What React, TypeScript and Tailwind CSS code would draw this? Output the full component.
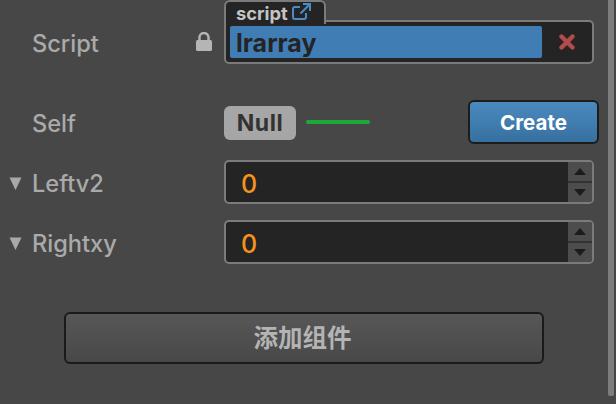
import React from "react";

const font = { fontFamily: '"Inter", "Liberation Sans", sans-serif' };

function NumberRow({ label }: { label: string }) {
  return (
    <div className="flex items-center h-[44px]">
      <div className="w-[224px] flex items-center pl-[9px] gap-[10px] shrink-0">
        <svg width="13" height="13" viewBox="0 0 13 13" className="shrink-0 mt-[2px]">
          <path d="M0.5 0.5h12L6.5 13z" fill="#a9a9a9" />
        </svg>
        <span className="text-[23.6px] font-medium text-[#aaaaaa] leading-none mt-[4px]">{label}</span>
      </div>
      <div className="w-[370px] h-[44px] rounded-[5px] border-2 border-[#7b7b7b] bg-[#242424] flex overflow-hidden">
        <div className="flex-1 flex items-center pl-[15px] pt-[4px] text-[25px] font-medium text-[#f6931e] leading-none">0</div>
        <div className="w-[24px] flex flex-col bg-[#4d4d4d]">
          <div className="flex-1 flex items-center justify-center border-b-2 border-[#333333]">
            <svg width="12" height="7" viewBox="0 0 12 7"><path d="M6 0l6 7H0z" fill="#1c1c1c" /></svg>
          </div>
          <div className="flex-1 flex items-center justify-center">
            <svg width="12" height="7" viewBox="0 0 12 7"><path d="M0 0h12L6 7z" fill="#1c1c1c" /></svg>
          </div>
        </div>
      </div>
    </div>
  );
}

export default function App() {
  return (
    <div className="w-[616px] h-[404px] bg-[#474747] flex overflow-hidden" style={font}>
      <div className="w-[608px] shrink-0 flex flex-col">
        <div className="flex h-[64px]">
          <div className="w-[224px] flex items-center justify-between pl-[32px] pr-[12px] pt-[24px] shrink-0">
            <span className="text-[23.6px] font-medium text-[#aaaaaa] leading-none">Script</span>
            <svg width="16" height="19" viewBox="0 0 16 19" className="-mt-[5px]">
              <path d="M3.5 9V5.5a4.5 4.5 0 0 1 9 0V9" fill="none" stroke="#b5b5b5" strokeWidth="2.4" />
              <rect x="0" y="8" width="16" height="11" rx="1.5" fill="#b5b5b5" />
            </svg>
          </div>
          <div className="w-[370px] h-[64px] relative flex flex-col justify-end">
            <div className="absolute left-0 top-0 w-[102px] h-[24px] rounded-t-[6px] border-2 border-b-0 border-[#7b7b7b] bg-[#242424] z-10 flex items-start pl-[10px] pt-[1px]">
              <span className="text-[18.3px] font-bold text-[#c4c4c4] leading-[20px]">script</span>
              <svg width="19" height="17" viewBox="0 0 19 17" fill="none" stroke="#4a8bc7" strokeWidth="2" className="ml-[4px]">
                <path d="M14 10v4a2 2 0 0 1-2 2H3a2 2 0 0 1-2-2V6a2 2 0 0 1 2-2h5" />
                <path d="M11 1h7v7M18 1L8.5 10.5" />
              </svg>
            </div>
            <div className="h-[44px] rounded-[5px] border-2 border-[#7b7b7b] bg-[#242424] flex items-center pl-[4px]">
              <div className="w-[312px] h-[32px] bg-[#417db5] rounded-[2px] flex items-center pl-[6px] pt-[2px]">
                <span className="text-[25px] font-bold text-[#242424] leading-none">lrarray</span>
              </div>
              <div className="flex-1 flex items-center justify-center">
                <svg width="16" height="16" viewBox="0 0 16 16">
                  <path d="M2.5 2.5l11 11M13.5 2.5l-11 11" stroke="#b44a4a" strokeWidth="4.4" strokeLinecap="round" />
                </svg>
              </div>
            </div>
          </div>
        </div>
        <div className="flex items-center h-[44px] mt-[36px]">
          <div className="w-[224px] pl-[32px] pt-[6px] shrink-0">
            <span className="text-[23.6px] font-medium text-[#aaaaaa] leading-none">Self</span>
          </div>
          <div className="w-[72px] h-[34px] mt-[2px] rounded-[6px] bg-[#a6a6a6] flex items-center justify-center text-[23px] tracking-[0.5px] font-bold text-[#333333] leading-none shrink-0">Null</div>
          <div className="w-[64px] h-[4px] rounded-full bg-[#1fa83a] ml-[10px] shrink-0"></div>
          <div className="ml-[98px] w-[131px] h-[44px] rounded-[6px] border-2 border-[#1c1c1c] flex items-center justify-center pt-[2px] text-[20.5px] font-bold text-white leading-none bg-gradient-to-b from-[#4a8ac0] to-[#37709f] shrink-0">Create</div>
        </div>
        <div className="mt-[16px] flex flex-col gap-[16px]">
          <NumberRow label="Leftv2" />
          <NumberRow label="Rightxy" />
        </div>
        <div className="mt-[48px] ml-[64px] w-[480px] h-[52px] rounded-[6px] border-2 border-[#1a1a1a] flex items-center justify-center pb-[2px] pr-[3px] text-[24.5px] font-bold text-[#b4b4b4] leading-none bg-gradient-to-b from-[#575757] to-[#484848]" style={{ fontFamily: '"Noto Sans CJK SC", sans-serif' }}>
          添加组件
        </div>
      </div>
      <div className="w-[6px] h-[396px] rounded-b-[2px] bg-[#7d7d7d] shrink-0"></div>
    </div>
  );
}
